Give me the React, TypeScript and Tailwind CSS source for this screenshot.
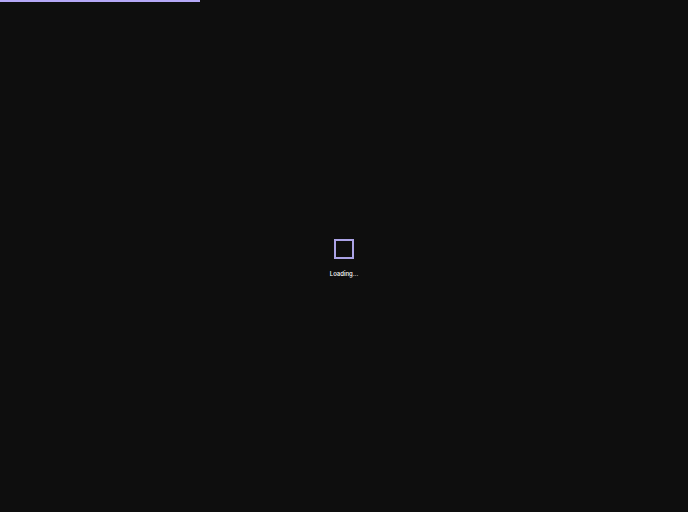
const App = () => {
  return (
    <div className="relative w-screen h-screen bg-[#0e0e0e] font-['Inter',sans-serif] antialiased">
      <div className="absolute top-0 left-0 h-[2px] w-[200px] bg-[#b5a8f7]" />
      <div className="flex h-full flex-col items-center justify-center pt-[4px]">
        <div className="w-[20px] h-[20px] border-2 border-[#aba3e6]" />
        <p className="mt-[10px] text-[6px] leading-[9px] font-medium text-white">Loading...</p>
      </div>
    </div>
  );
};

export default App;
